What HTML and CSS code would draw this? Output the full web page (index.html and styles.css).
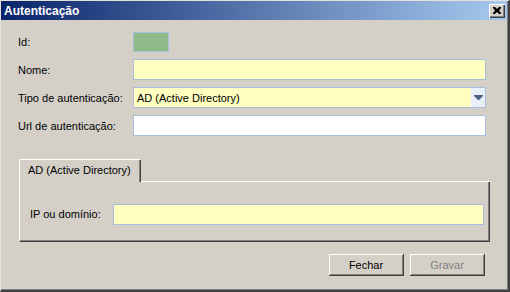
FILE: index.html
```html
<!DOCTYPE html>
<html lang="pt">
<head>
  <meta charset="UTF-8" />
  <title>Autenticação</title>
  <link rel="stylesheet" href="styles.css">
</head>
<body>
  <div class="window">
    <div class="titlebar">
      <span class="title">Autenticação</span>
      <button class="close-btn" aria-label="Fechar">
        <svg width="8" height="7" viewBox="0 0 8 7">
          <path d="M0 0h2l2 2 2-2h2v1l-2 2.5 2 2.5v1h-2l-2-2-2 2h-2v-1l2-2.5-2-2.5z" fill="#000"/>
        </svg>
      </button>
    </div>

    <div class="content">
      <div class="fields">
        <label>Id:</label>
        <div class="id-box"></div>

        <label>Nome:</label>
        <div class="field required"></div>

        <label>Tipo de autenticação:</label>
        <div class="field required select">
          <span class="select-value">AD (Active Directory)</span>
          <span class="select-btn">
            <svg width="9" height="5" viewBox="0 0 9 5"><path d="M0 0h9v1l-4 4h-1l-4-4z" fill="#4d6185"/></svg>
          </span>
        </div>

        <label>Url de autenticação:</label>
        <div class="field"></div>
      </div>

      <div class="tabs">
        <div class="tab-strip">
          <div class="tab">AD (Active Directory)</div>
          <div class="tab-rest"></div>
        </div>
        <div class="tab-panel">
          <label>IP ou domínio:</label>
          <div class="field required wide"></div>
        </div>
      </div>

      <div class="actions">
        <button class="btn">Fechar</button>
        <button class="btn" disabled>Gravar</button>
      </div>
    </div>
  </div>
</body>
</html>
```

FILE: styles.css
```css
* {
  box-sizing: border-box;
  margin: 0;
  padding: 0;
}

body {
  font-family: 'Liberation Sans', Arial, sans-serif;
  font-size: 11px;
  color: #000;
  background: #d4d0c8;
}

.window {
  width: 510px;
  height: 292px;
  background: #d4d0c8;
  border-top: 1px solid #e4e1db;
  border-left: 1px solid #e4e1db;
  border-right: 2px solid #404040;
  border-bottom: 2px solid #404040;
  box-shadow: inset -1px -1px 0 #808080;
}

.titlebar {
  height: 19px;
  margin-right: 1px;
  display: flex;
  align-items: center;
  justify-content: space-between;
  padding: 0 2px 0 3px;
  background: linear-gradient(to right, #0a246a, #a6caf0);
}

.title {
  color: #fff;
  font-weight: bold;
  font-size: 12px;
}

.close-btn {
  width: 16px;
  height: 14px;
  display: flex;
  align-items: center;
  justify-content: center;
  background: #d4d0c8;
  border: none;
  box-shadow: inset 1px 1px 0 #fff, inset -1px -1px 0 #404040, inset -2px -2px 0 #808080;
}

.content {
  padding: 12px 0 0 17px;
}

.fields {
  display: grid;
  grid-template-columns: 115px 353px;
  row-gap: 7px;
  align-items: center;
}

.fields label {
  line-height: 20px;
}

.id-box {
  width: 36px;
  height: 20px;
  background: #8fbb8b;
  border: 1px solid #a9bfdc;
}

.field {
  height: 21px;
  background: #fff;
  border: 1px solid #a9bedc;
}

.field.required {
  background: #ffffc0;
}

.select {
  display: flex;
  align-items: center;
}

.select-value {
  flex: 1;
  padding-left: 3px;
}

.select-btn {
  width: 14px;
  align-self: stretch;
  display: flex;
  align-items: center;
  justify-content: center;
  background: #e8eff9;
}

.tabs {
  margin: 23px 0 0 1px;
  width: 471px;
}

.tab-strip {
  display: flex;
  align-items: flex-end;
}

.tab {
  width: 122px;
  height: 23px;
  padding: 4px 0 0 8px;
  border-top: 1px solid #fff;
  border-left: 1px solid #fff;
  border-right: 1px solid #404040;
  border-radius: 2px 2px 0 0;
  box-shadow: inset -1px 0 0 #808080;
}

.tab-rest {
  flex: 1;
  border-bottom: 1px solid #fff;
}

.tab-panel {
  height: 60px;
  display: flex;
  align-items: flex-start;
  padding: 22px 0 0 10px;
  border-left: 1px solid #fff;
  border-right: 1px solid #404040;
  border-bottom: 1px solid #404040;
  box-shadow: inset -1px -1px 0 #808080;
}

.tab-panel label {
  width: 83px;
  line-height: 21px;
}

.field.wide {
  width: 371px;
}

.actions {
  display: flex;
  justify-content: flex-end;
  gap: 6px;
  margin: 12px 23px 0 0;
}

.btn {
  width: 75px;
  height: 22px;
  font-family: inherit;
  font-size: 11px;
  color: #000;
  background: #d4d0c8;
  border: none;
  border-right: 1px solid #404040;
  border-bottom: 1px solid #404040;
  box-shadow: inset 1px 1px 0 #fff, inset -1px -1px 0 #808080;
}

.btn:disabled {
  color: #808080;
}
```
